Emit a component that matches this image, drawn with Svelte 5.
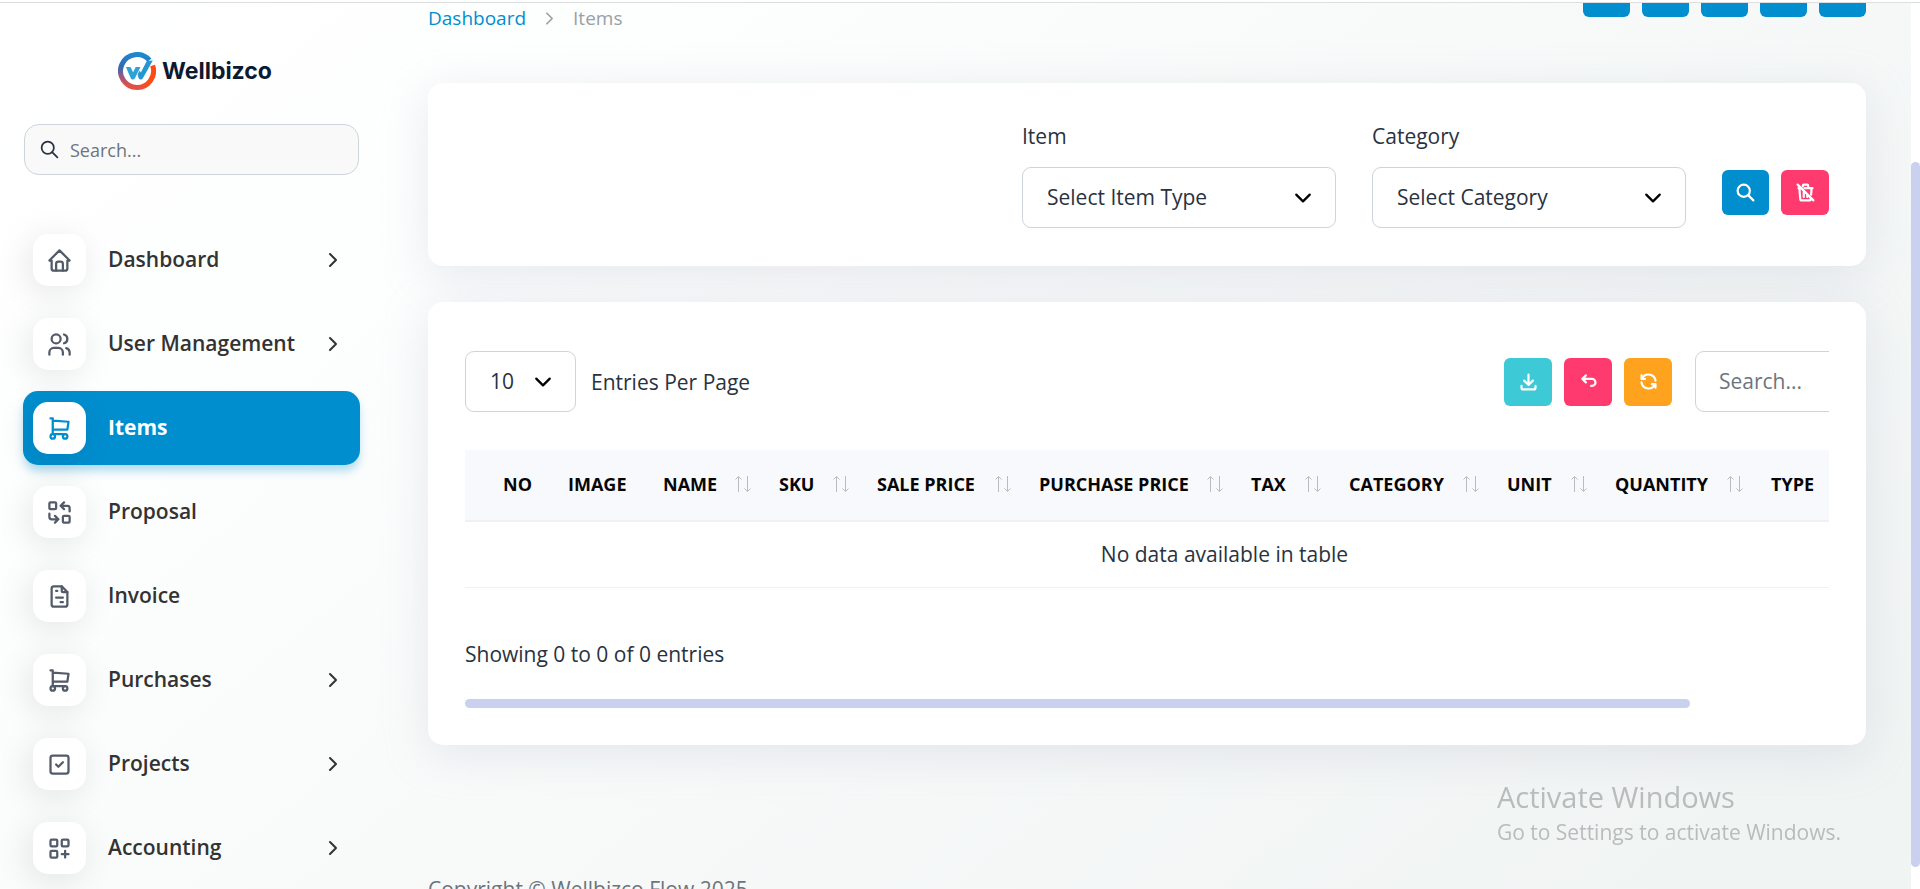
<script>
  const icons = {
    home: '<path d="M5 12H3l9-9 9 9h-2M5 12v7a2 2 0 0 0 2 2h10a2 2 0 0 0 2-2v-7"/><path d="M9 21v-6a2 2 0 0 1 2-2h2a2 2 0 0 1 2 2v6"/>',
    users: '<circle cx="9" cy="7" r="4"/><path d="M3 21v-2a4 4 0 0 1 4-4h4a4 4 0 0 1 4 4v2M16 3.13a4 4 0 0 1 0 7.75M21 21v-2a4 4 0 0 0-3-3.85"/>',
    cart: '<circle cx="6" cy="19" r="2"/><circle cx="17" cy="19" r="2"/><path d="M17 17H6V3H4M6 5l14 1-1 7H6"/>',
    replace: '<rect x="3" y="3" width="6" height="6" rx="1"/><rect x="15" y="15" width="6" height="6" rx="1"/><path d="M21 11V8a2 2 0 0 0-2-2h-6l3 3m0-6-3 3M3 13v3a2 2 0 0 0 2 2h6l-3-3m0 6 3-3"/>',
    invoice: '<path d="M14 3v4a1 1 0 0 0 1 1h4"/><path d="M17 21H7a2 2 0 0 1-2-2V5a2 2 0 0 1 2-2h7l5 5v11a2 2 0 0 1-2 2zM9 7h1M9 13h6M13 17h2"/>',
    check: '<rect x="4" y="4" width="16" height="16" rx="2"/><path d="m9 12 2 2 4-4"/>',
    grid: '<rect x="4" y="4" width="6" height="6" rx="1"/><rect x="14" y="4" width="6" height="6" rx="1"/><rect x="4" y="14" width="6" height="6" rx="1"/><path d="M14 17h6M17 14v6"/>',
    chevron: '<path d="m9 6 6 6-6 6"/>',
    search: '<circle cx="10" cy="10" r="7"/><path d="m21 21-6-6"/>',
    trashOff: '<path d="m3 3 18 18M4 7h3m4 0h9M10 11v6M14 14v3M5 7l1 12a2 2 0 0 0 2 2h8a2 2 0 0 0 2-2l.08-.92m.3-3.7L19 7M9 5V4a1 1 0 0 1 1-1h4a1 1 0 0 1 1 1v3"/>',
    download: '<path d="M4 17v2a2 2 0 0 0 2 2h12a2 2 0 0 0 2-2v-2M7 11l5 5 5-5M12 4v12"/>',
    back: '<path d="M9 13 5 9l4-4M5 9h11a4 4 0 0 1 0 8h-1"/>',
    refresh: '<path d="M20 11A8.1 8.1 0 0 0 4.5 9M4 5v4h4M4 13a8.1 8.1 0 0 0 15.5 2M20 19v-4h-4"/>'
  };

  const nav = [
    { label: 'Dashboard', icon: 'home', more: true },
    { label: 'User Management', icon: 'users', more: true },
    { label: 'Items', icon: 'cart', active: true },
    { label: 'Proposal', icon: 'replace' },
    { label: 'Invoice', icon: 'invoice' },
    { label: 'Purchases', icon: 'cart', more: true },
    { label: 'Projects', icon: 'check', more: true },
    { label: 'Accounting', icon: 'grid', more: true }
  ];

  const columns = [
    { label: 'No', width: 85 },
    { label: 'Image', width: 95 },
    { label: 'Name', width: 116, sort: true },
    { label: 'SKU', width: 98, sort: true },
    { label: 'Sale Price', width: 162, sort: true },
    { label: 'Purchase Price', width: 212, sort: true },
    { label: 'Tax', width: 98, sort: true },
    { label: 'Category', width: 158, sort: true },
    { label: 'Unit', width: 108, sort: true },
    { label: 'Quantity', width: 156, sort: true },
    { label: 'Type', width: 231 }
  ];

  // The horizontal thumb shows how much of the wide table is visible.
  const contentWidth = columns.reduce((sum, c) => sum + c.width, 0);
  let visibleWidth = $state(1364);
  const thumb = $derived(Math.min(100, (visibleWidth / contentWidth) * 100));
</script>

{#snippet icon(name)}
  <svg class="icon" viewBox="0 0 24 24" aria-hidden="true">{@html icons[name]}</svg>
{/snippet}

<div class="page">
  <aside class="sidebar">
    <a class="brand" href="#home">
      <svg class="mark" viewBox="0 0 38 38" aria-hidden="true">
        <defs>
          <linearGradient id="ringLeft" x1="0.6" y1="0" x2="0.45" y2="1">
            <stop offset="0" stop-color="#1e88cf" />
            <stop offset="0.45" stop-color="#2f68b8" />
            <stop offset="0.75" stop-color="#a0577d" />
            <stop offset="1" stop-color="#e8503c" />
          </linearGradient>
          <linearGradient id="ringRight" x1="1" y1="0" x2="0" y2="1">
            <stop offset="0" stop-color="#ff4a10" />
            <stop offset="0.6" stop-color="#fb4c1c" />
            <stop offset="1" stop-color="#e0504a" />
          </linearGradient>
        </defs>
        <path d="M31.5 8.2A16.5 16.5 0 1 0 19 35.5" fill="none" stroke="url(#ringLeft)" stroke-width="5" />
        <path d="M34.6 13.5A16.5 16.5 0 0 1 18.6 35.5" fill="none" stroke="url(#ringRight)" stroke-width="5" />
        <path d="m19.6 22.3 2-3.8 1.2 2L28.8 9l6-.6L25 26q-.9 1.6-2.3 1.6T20.600 26z" fill="#2497d3" />
        <path d="M8 15h4.500l2.600 5.200L17.700 15h4.800L17 26q-.8 1.600-2.200 1.600T12.700 26l-2.900-6.500z" fill="#2ba3d8" />
      </svg>
      <span>Wellbizco</span>
    </a>

    <label class="side-search">
      {@render icon('search')}
      <input type="search" placeholder="Search..." aria-label="Search..." />
    </label>

    <nav>
      {#each nav as item}
        <a href="#{item.icon}" class="nav-item" class:active={item.active}>
          <span class="tile">{@render icon(item.icon)}</span>
          <span class="nav-label">{item.label}</span>
          {#if item.more}{@render icon('chevron')}{/if}
        </a>
      {/each}
    </nav>
  </aside>

  <main>
    <header>
      <div class="crumbs">
        <a href="#dashboard">Dashboard</a>
        {@render icon('chevron')}
        <span>Items</span>
      </div>
      <div class="head-actions">
        {#each [1, 2, 3, 4, 5] as n}
          <button class="btn blue" aria-label={String(n)}></button>
        {/each}
      </div>
    </header>

    <section class="card filters">
      <div class="field">
        <label for="item-type">Item</label>
        <select id="item-type"><option>Select Item Type</option></select>
      </div>
      <div class="field">
        <label for="category">Category</label>
        <select id="category"><option>Select Category</option></select>
      </div>
      <div class="filter-actions">
        <button class="btn blue" aria-label="Search">{@render icon('search')}</button>
        <button class="btn pink" aria-label="Reset">{@render icon('trashOff')}</button>
      </div>
    </section>

    <section class="card listing">
      <div class="scroller" bind:clientWidth={visibleWidth}>
        <div class="wide">
          <div class="toolbar">
            <label class="entries">
              <select><option>10</option></select>
              <span>Entries Per Page</span>
            </label>
            <div class="tools">
              <button class="btn teal" aria-label="Export">{@render icon('download')}</button>
              <button class="btn pink" aria-label="Reset">{@render icon('back')}</button>
              <button class="btn orange" aria-label="Reload">{@render icon('refresh')}</button>
              <input type="search" placeholder="Search..." aria-label="Search..." />
            </div>
          </div>

          <table>
            <colgroup>
              {#each columns as c}<col style="width: {c.width}px" />{/each}
            </colgroup>
            <thead>
              <tr>
                {#each columns as c}
                  <th>
                    <div class="th">
                      <span>{c.label}</span>
                      {#if c.sort}
                        <svg class="sort" viewBox="0 0 16 16" aria-hidden="true">
                          <path d="M3.5 16V1M.5 3.5l3-3 3 3M12.5 0v15M9.5 12.5l3 3 3-3" />
                        </svg>
                      {/if}
                    </div>
                  </th>
                {/each}
              </tr>
            </thead>
            <tbody>
              <tr><td colspan={columns.length}>No data available in table</td></tr>
            </tbody>
          </table>

          <p>Showing 0 to 0 of 0 entries</p>
        </div>
      </div>
      <div class="track" style="width: {thumb}%"></div>
    </section>

    <footer>Copyright © Wellbizco Flow 2025</footer>
  </main>

  <div class="page-scroll"><div class="page-thumb"></div></div>
</div>

<div class="watermark">
  <strong>Activate Windows</strong>
  <span>Go to Settings to activate Windows.</span>
</div>

<style>
  :global(body) {
    margin: 0;
    background: #fff;
  }

  .page,
  .watermark {
    font-family: 'Open Sans', 'Noto Sans', sans-serif;
  }

  .page,
  .page * {
    box-sizing: border-box;
  }

  .page {
    display: flex;
    height: calc(100vh - 2px);
    overflow: hidden;
    border-top: 1px solid #dcdedf;
    margin-top: 2px;
    font-size: 21px;
    line-height: 32px;
    color: #293240;
    background: linear-gradient(141deg, #fff 4%, #fdfefe 22%, #f0f4f3 92%);
  }

  a {
    color: inherit;
    text-decoration: none;
  }

  input,
  select,
  button {
    font: inherit;
    color: inherit;
    margin: 0;
  }

  .icon {
    flex: none;
    width: 21px;
    height: 21px;
    fill: none;
    stroke: currentColor;
    stroke-width: 2;
    stroke-linecap: round;
    stroke-linejoin: round;
  }

  .sidebar {
    flex: 0 0 383px;
    padding: 46px 23px 0;
  }

  .brand {
    display: flex;
    align-items: center;
    gap: 6px;
    margin-left: 95px;
    font: 700 23px/44px Inter, sans-serif;
    color: #0b1a33;
  }

  .mark {
    width: 38px;
    height: 38px;
  }

  .side-search {
    display: flex;
    align-items: center;
    gap: 10px;
    height: 51px;
    margin: 31px 1px 48px;
    padding: 0 14px;
    border: 1px solid #ced4da;
    border-radius: 15px;
    background: #f9f9fa;
    font-size: 18px;
    color: #293240;
  }

  input::placeholder {
    color: #6c757d;
    opacity: 1;
  }

  .side-search input {
    flex: 1;
    min-width: 0;
    padding: 0;
    border: 0;
    outline: 0;
    background: none;
  }

  nav {
    display: flex;
    flex-direction: column;
    gap: 10px;
  }

  .nav-item {
    display: flex;
    align-items: center;
    height: 74px;
    padding: 0 15px 0 10px;
    border-radius: 15px;
    font-weight: 600;
    color: #333;
  }

  .tile {
    display: grid;
    place-items: center;
    flex: none;
    width: 53px;
    height: 52px;
    margin-right: 22px;
    border-radius: 15px;
    background: #fff;
    color: #525b69;
    box-shadow: -4px 6px 34px rgba(0, 0, 0, 0.1);
  }

  .tile .icon {
    width: 27px;
    height: 27px;
  }

  .nav-label {
    flex: 1;
    padding-bottom: 2px;
  }

  .nav-item > .icon {
    width: 24px;
    height: 24px;
  }

  .nav-item.active {
    font-weight: 700;
    color: #fff;
    background: #008ecf;
    box-shadow: 0 7px 10px -1px rgba(0, 142, 207, 0.3);
  }

  .active .tile {
    color: #008ecf;
  }

  main {
    flex: 1;
    min-width: 0;
    padding: 0 45px;
  }

  header {
    display: flex;
    align-items: flex-start;
    justify-content: space-between;
    height: 60px;
    margin-top: -30px;
    margin-bottom: 50px;
  }

  .crumbs {
    display: flex;
    align-items: center;
    align-self: flex-end;
    gap: 13px;
    height: 30px;
    font-size: 19px;
    color: #9aa0a6;
  }

  .crumbs a {
    color: #008ecf;
  }

  .head-actions,
  .filter-actions {
    display: flex;
    gap: 12px;
  }

  .btn {
    display: grid;
    place-items: center;
    width: 47px;
    height: 45px;
    padding: 0;
    border: 0;
    border-radius: 6px;
    color: #fff;
  }

  .head-actions .btn {
    height: 44px;
  }

  .blue {
    background: #008ecf;
  }
  .pink {
    width: 48px;
    background: #ff3a6e;
  }
  .teal {
    background: #3ec9d6;
  }
  .orange {
    background: #ffa21d;
  }

  .card {
    border-radius: 15px;
    background: #fff;
    box-shadow: 0 9px 45px rgba(182, 186, 203, 0.3);
  }

  .filters {
    display: flex;
    justify-content: flex-end;
    align-items: flex-end;
    gap: 36px;
    margin-bottom: 36px;
    padding: 37px 37px 38px;
  }

  .field {
    display: grid;
    gap: 15px;
    width: 314px;
  }

  select,
  .tools input {
    height: 61px;
    border: 1px solid #ced4da;
    border-radius: 9px;
    outline: 0;
    background-color: #fff;
  }

  select {
    appearance: none;
    padding: 0 24px 2px;
    background-image: url("data:image/svg+xml,%3Csvg xmlns='http://www.w3.org/2000/svg' viewBox='0 0 16 16'%3E%3Cpath fill='none' stroke='%23000' stroke-linecap='round' stroke-linejoin='round' stroke-width='2' d='m2 5 6 6 6-6'/%3E%3C/svg%3E");
    background-repeat: no-repeat;
    background-position: right 23px center;
    background-size: 18px;
  }

  .filter-actions {
    padding-bottom: 13px;
  }

  .listing {
    padding: 49px 37px 37px;
  }

  .scroller {
    overflow: hidden;
  }

  .wide {
    width: 1519px;
  }

  .toolbar {
    display: flex;
    justify-content: space-between;
    margin-bottom: 38px;
  }

  .entries {
    display: flex;
    align-items: center;
    gap: 15px;
  }

  .entries select {
    width: 111px;
  }

  .tools {
    display: flex;
    align-items: center;
    gap: 12px;
  }

  .tools .btn {
    width: 48px;
    height: 48px;
  }

  .btn .icon {
    stroke-width: 2.5;
  }

  .tools input {
    width: 289px;
    margin-left: 11px;
    padding: 0 23px 2px;
  }

  table {
    width: 100%;
    table-layout: fixed;
    border-collapse: separate;
    border-spacing: 0;
  }

  th {
    height: 72px;
    padding: 0 10px 2px 18px;
    border-bottom: 2px solid #f1f1f1;
    background: #f8f9fd;
    font-size: 18px;
    font-weight: 700;
    text-align: left;
    text-transform: uppercase;
    white-space: nowrap;
    color: #060606;
  }

  th:first-child {
    padding-left: 38px;
    padding-right: 0;
  }

  .th {
    display: flex;
    align-items: center;
    justify-content: space-between;
  }

  .sort {
    width: 16px;
    height: 16px;
    fill: none;
    stroke: #babcc0;
    stroke-width: 1;
  }

  td {
    height: 66px;
    padding: 0 0 2px;
    border-bottom: 1px solid #f1f1f1;
    text-align: center;
  }

  p {
    margin: 50px 0 29px;
  }

  .track {
    height: 9px;
    border-radius: 5px;
    background: #cad0ef;
  }

  footer {
    margin-top: 128px;
    color: #6c757d;
    white-space: nowrap;
  }

  .page-scroll {
    flex: 0 0 9px;
    background: #fff;
  }

  .page-thumb {
    height: 705px;
    margin-top: 159px;
    border-radius: 5px;
    background: #cad0ef;
  }

  .watermark {
    position: fixed;
    right: 79px;
    bottom: 42px;
    display: grid;
    color: #b9bcbc;
    pointer-events: none;
  }

  .watermark strong {
    font-size: 29px;
    font-weight: 400;
    line-height: 40px;
  }

  .watermark span {
    font-size: 21px;
    line-height: 30px;
  }
</style>
